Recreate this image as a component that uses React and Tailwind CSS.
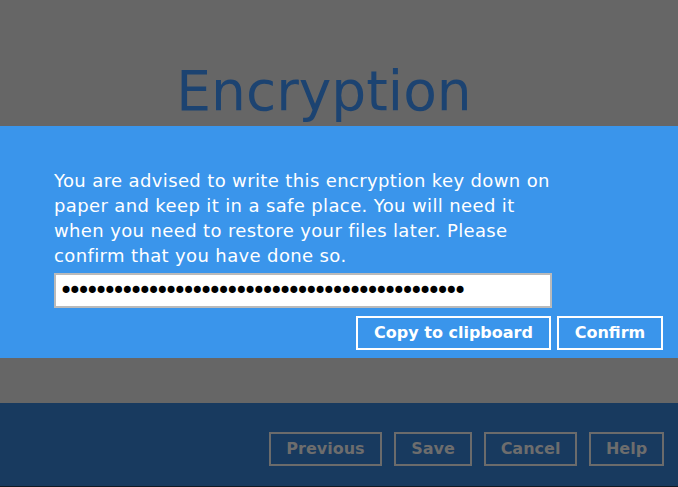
import React from "react";

const footerButtons = [
  { label: "Previous", w: "w-[113px]" },
  { label: "Save", w: "w-[78px]" },
  { label: "Cancel", w: "w-[93px]" },
  { label: "Help", w: "w-[75px]" },
];

const App = () => {
  return (
    <div
      className="w-full h-[487px] flex flex-col bg-[#666666] overflow-hidden"
      style={{ fontFamily: '"DejaVu Sans", Verdana, sans-serif' }}
    >
      {/* title area, dimmed by the overlay */}
      <div className="h-[126px] flex justify-center items-end pr-[30px]">
        <h1 className="text-[55px] leading-none text-[#1c4371] pb-[7px]">Encryption</h1>
      </div>

      {/* key dialog */}
      <div className="h-[232px] bg-[#3a95eb] pl-[54px] pr-[15px] pt-[42px]">
        <p className="w-[500px] text-[18px] leading-[25px] tracking-[0.37px] text-white">
          You are advised to write this encryption key down on paper and keep it in a safe place. You will need it when you need to restore your files later. Please confirm that you have done so.
        </p>
        <input
          type="password"
          readOnly
          value={"x".repeat(46)}
          className="mt-[5px] block w-[498px] h-[35px] bg-white border-2 border-[#bababa] pl-[3px] text-[24px] tracking-[-5.4px] text-black outline-none"
        />
        <div className="mt-[8px] flex justify-end gap-[6px]">
          <button className="h-[34px] w-[195px] border-2 border-white text-white font-bold text-[16px]">
            Copy to clipboard
          </button>
          <button className="h-[34px] w-[106px] border-2 border-white text-white font-bold text-[16px]">
            Confirm
          </button>
        </div>
      </div>

      <div className="h-[45px]" />

      {/* wizard footer */}
      <div className="h-[84px] bg-[#183a5f] border-b border-[#111a24] flex justify-end items-start gap-[12px] pt-[29px] pr-[14px]">
        {footerButtons.map((b) => (
          <button
            key={b.label}
            className={`${b.w} h-[34px] border-2 border-[#6b6b6b] text-[#6d6d6d] font-bold text-[16px]`}
          >
            {b.label}
          </button>
        ))}
      </div>
    </div>
  );
};

export default App;
